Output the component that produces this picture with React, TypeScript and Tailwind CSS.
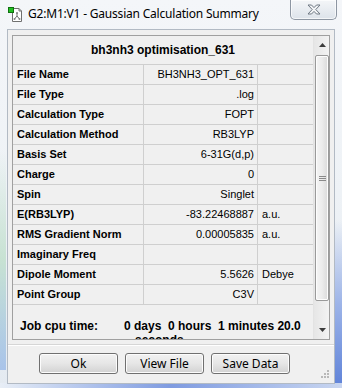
import React from "react";

const rows: [string, string, string][] = [
  ["File Name", "BH3NH3_OPT_631", ""],
  ["File Type", ".log", ""],
  ["Calculation Type", "FOPT", ""],
  ["Calculation Method", "RB3LYP", ""],
  ["Basis Set", "6-31G(d,p)", ""],
  ["Charge", "0", ""],
  ["Spin", "Singlet", ""],
  ["E(RB3LYP)", "-83.22468887", "a.u."],
  ["RMS Gradient Norm", "0.00005835", "a.u."],
  ["Imaginary Freq", "", ""],
  ["Dipole Moment", "5.5626", "Debye"],
  ["Point Group", "C3V", ""],
];

function Btn({ label }: { label: string }) {
  return (
    <div className="w-[79px] h-[21px] rounded-[3px] border border-[#707070] bg-linear-to-b from-[#f2f2f2] via-[#e6e6e6] to-[#d2d2d2] shadow-[inset_0_0_0_1px_#fcfcfc] flex items-center justify-center text-[12px] text-black font-['Noto_Sans',sans-serif]">
      {label}
    </div>
  );
}

export default function App() {
  return (
    <div className="relative w-[342px] h-[388px] overflow-hidden bg-linear-to-b from-[#f4f6f9] via-[#eef2f6] to-[#e4eaf1] font-['Liberation_Sans',Arial,sans-serif]">
      {/* frame decorations */}
      <div className="absolute left-0 top-[150px] w-[6px] h-[220px] bg-linear-to-b from-transparent via-[#b8dcc4] to-[#8fb2e6] opacity-70" />
      <div className="absolute right-0 top-[220px] w-[7px] h-[168px] bg-linear-to-b from-transparent via-[#9db4e8] to-[#5f82d8]" />
      <div className="absolute left-0 bottom-0 w-[342px] h-[5px] bg-linear-to-r from-[#e8eef6] via-[#7f9be0] to-[#c9d6f0]" />

      {/* title bar */}
      <div className="h-[29px] flex items-center pl-[8px] pb-[1px]">
        <svg width="15" height="15" viewBox="0 0 15 15" className="shrink-0">
          <path d="M4.5 1.5 H11 L13.5 4 V14.5 H4.5 Z" fill="#fff" stroke="#707070" />
          <path d="M11 1.5 V4 H13.5" fill="none" stroke="#707070" />
          <path d="M9 6 V9 M9 9 L6.5 12 M9 9 L11.5 12" stroke="#707070" strokeWidth="1" fill="none" />
          <circle cx="9" cy="6" r="1" fill="#808080" />
          <circle cx="6.5" cy="12" r="1" fill="#808080" />
          <circle cx="11.5" cy="12" r="1" fill="#808080" />
          <rect x="0.5" y="0.5" width="5" height="5" fill="#22c022" stroke="#107010" />
        </svg>
        <span className="ml-[5px] text-[12px] text-black font-['Noto_Sans',sans-serif] tracking-[-0.2px] leading-none">
          G2:M1:V1 - Gaussian Calculation Summary
        </span>
      </div>

      {/* close button */}
      <div className="absolute top-0 left-[290px] w-[47px] h-[20px] rounded-b-[5px] border border-t-0 border-[#8d96a2] bg-linear-to-b from-[#f4f6f8] to-[#dde3ea] shadow-[inset_0_0_0_1px_#ffffffaa] flex items-center justify-center">
        <svg width="14" height="11" viewBox="0 0 14 11">
          <path
            d="M1 1 H4.5 L7 3.6 L9.5 1 H13 L8.8 5.5 L13 10 H9.5 L7 7.4 L4.5 10 H1 L5.2 5.5 Z"
            fill="#f2f4f6"
            stroke="#6f7883"
            strokeWidth="1"
            strokeLinejoin="round"
          />
        </svg>
      </div>

      {/* client area */}
      <div className="relative mx-[7px] h-[355px] border border-[#b2bac4] bg-[#f0f0f0]">
        <div className="px-[4px] pt-[5px]">
          {/* panel */}
          <div className="h-[305px] border border-[#a0a0a0] bg-[#f0f0f0] flex overflow-hidden">
            <div className="w-[300px] flex flex-col">
              <div className="h-[29px] shrink-0 border-b border-[#cfcfcf] flex items-center justify-center text-[12px] font-bold text-black">
                bh3nh3 optimisation_631
              </div>
              {rows.map(([k, v, u]) => (
                <div key={k} className="h-[20px] shrink-0 border-b border-[#cfcfcf] flex text-[11px] text-black">
                  <div className="w-[131px] border-r border-[#cfcfcf] font-bold pl-[4px] flex items-center whitespace-nowrap">
                    {k}
                  </div>
                  <div className="w-[114px] border-r border-[#cfcfcf] pr-[3px] flex items-center justify-end whitespace-nowrap">
                    {v}
                  </div>
                  <div className="w-[55px] pl-[4px] flex items-center whitespace-nowrap">{u}</div>
                </div>
              ))}
              <div className="flex pt-[14px] text-[12px] font-bold text-black leading-[14px]">
                <div className="w-[111px] pl-[7px] whitespace-nowrap">Job cpu time:</div>
                <div className="whitespace-pre">
                  <div>{"0 days  0 hours  1 minutes 20.0"}</div>
                  <div className="pl-[11px]">seconds</div>
                </div>
              </div>
            </div>
            {/* scrollbar */}
            <div className="w-[17px] shrink-0 border-l border-[#e3e3e3] bg-linear-to-r from-[#e6e6e6] to-[#f4f4f4] flex flex-col items-center">
              <div className="h-[18px] w-full flex items-center justify-center">
                <svg width="7" height="4" viewBox="0 0 7 4">
                  <path d="M0 4 L3.5 0 L7 4 Z" fill="#3c3c3c" />
                </svg>
              </div>
              <div className="mt-[1px] h-[246px] w-[14px] rounded-[2px] border border-[#9a9a9a] bg-linear-to-r from-[#f5f5f5] via-[#ececec] to-[#dadada] shadow-[inset_0_0_0_1px_#fdfdfd] flex items-center justify-center">
                <svg width="7" height="7" viewBox="0 0 7 7">
                  <path d="M0 1.5 H7 M0 3.5 H7 M0 5.5 H7" stroke="#8a8a8a" strokeWidth="1" />
                </svg>
              </div>
              <div className="flex-1" />
              <div className="h-[18px] w-full flex items-center justify-center">
                <svg width="7" height="4" viewBox="0 0 7 4">
                  <path d="M0 0 L7 0 L3.5 4 Z" fill="#3c3c3c" />
                </svg>
              </div>
            </div>
          </div>
        </div>
        {/* separator */}
        <div className="mt-[4px] h-[2px] border-t border-[#d6d6d6] border-b border-b-white" />
        {/* buttons */}
        <div className="flex gap-[7px] pl-[31px] pt-[7px]">
          <Btn label="Ok" />
          <Btn label="View File" />
          <Btn label="Save Data" />
        </div>
        {/* size grip */}
        <svg className="absolute right-[5px] bottom-[5px]" width="8" height="8" viewBox="0 0 8 8">
          {[
            [6, 0],
            [6, 3],
            [3, 3],
            [6, 6],
            [3, 6],
            [0, 6],
          ].map(([x, y], i) => (
            <rect key={i} x={x} y={y} width="2" height="2" fill="#b8b8b8" />
          ))}
        </svg>
      </div>
    </div>
  );
}
